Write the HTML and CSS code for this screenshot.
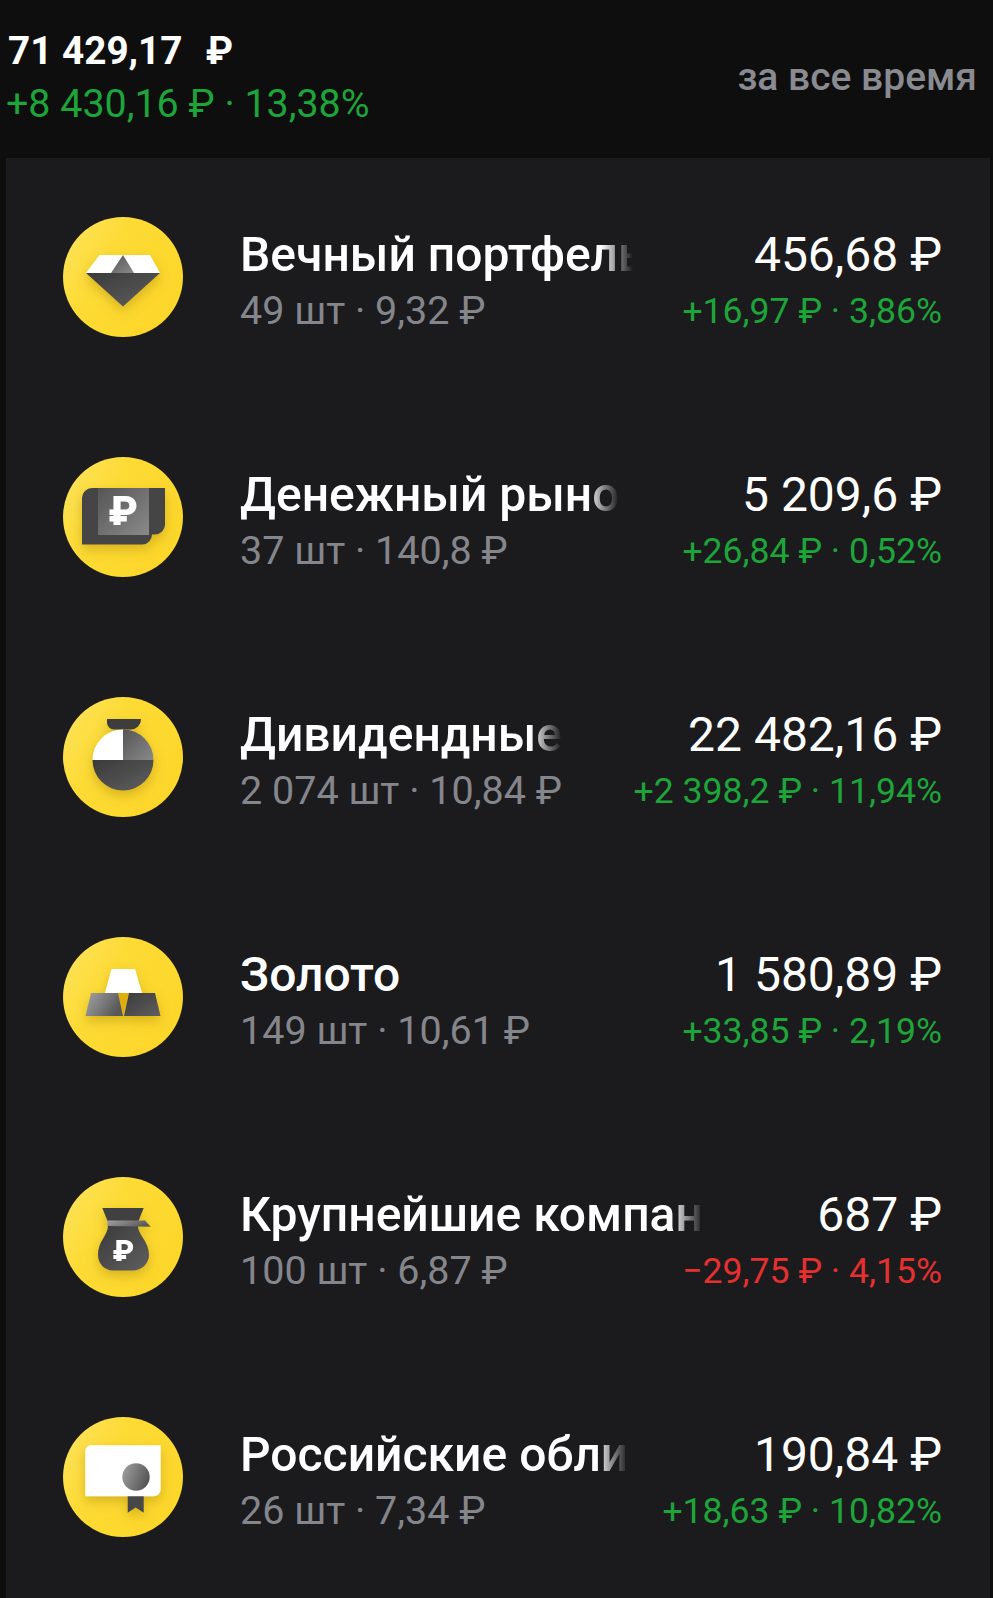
FILE: index.html
```html
<!DOCTYPE html>
<html lang="ru">
<head>
    <meta charset="UTF-8">
    <meta name="viewport" content="width=device-width, initial-scale=1.0">
    <title>Портфель</title>
    <link rel="stylesheet" href="styles.css">
</head>
<body>
    <svg class="defs" width="0" height="0" aria-hidden="true">
        <defs>
            <linearGradient id="coin" x1="0" y1="0" x2="1" y2="0.6">
                <stop offset="0" stop-color="#fde35f"/>
                <stop offset="0.45" stop-color="#fddb34"/>
                <stop offset="1" stop-color="#fdd62a"/>
            </linearGradient>
            <linearGradient id="dark" x1="0" y1="0" x2="1" y2="1">
                <stop offset="0" stop-color="#3a3a3a"/>
                <stop offset="1" stop-color="#5f5f5f"/>
            </linearGradient>
            <linearGradient id="mid" x1="0" y1="0" x2="1" y2="1">
                <stop offset="0" stop-color="#555"/>
                <stop offset="1" stop-color="#8a8a8a"/>
            </linearGradient>
            <linearGradient id="steel" x1="0" y1="0" x2="1" y2="0.4">
                <stop offset="0" stop-color="#a4a4a4"/>
                <stop offset="1" stop-color="#585858"/>
            </linearGradient>
            <filter id="soft" x="-30%" y="-30%" width="160%" height="170%">
                <feDropShadow dx="0" dy="5" stdDeviation="6" flood-color="#8a6a00" flood-opacity="0.35"/>
            </filter>
        </defs>
    </svg>

    <header class="summary">
        <div class="summary-left">
            <div class="total">71 429,17 &nbsp;<span class="total-rub">₽</span></div>
            <div class="gain up">+8 430,16 ₽ · 13,38%</div>
        </div>
        <div class="period">за все время</div>
    </header>

    <main class="list">
        <div class="row">
            <svg class="coin" viewBox="0 0 120 120">
                <circle cx="60" cy="60" r="60" fill="url(#coin)"/>
                <g filter="url(#soft)">
                    <polygon points="36.5,38 87,38 97,56 23,56" fill="#fff"/>
                    <polygon points="60,38 71,56 48,56" fill="url(#mid)"/>
                    <polygon points="23,56 97,56 60,89.5" fill="url(#dark)"/>
                </g>
            </svg>
            <div class="info">
                <div class="name fade clipped">Вечный портфель</div>
                <div class="meta">49 шт · 9,32 ₽</div>
            </div>
            <div class="values">
                <div class="amount">456,68 ₽</div>
                <div class="change up">+16,97 ₽ · 3,86%</div>
            </div>
        </div>

        <div class="row">
            <svg class="coin" viewBox="0 0 120 120">
                <circle cx="60" cy="60" r="60" fill="url(#coin)"/>
                <g filter="url(#soft)">
                    <path d="M19 87.500V41a10 10 0 0 1 10-10h73v36.500a10 10 0 0 1-10 10h-3a9.500 10 0 0 1-9.500 10z" fill="#454545"/>
                    <rect x="35" y="31" width="51" height="47" fill="url(#mid)"/>
                    <text class="coin-rub" x="60" y="68" font-size="41">₽</text>
                </g>
            </svg>
            <div class="info">
                <div class="name fade">Денежный рыно</div>
                <div class="meta">37 шт · 140,8 ₽</div>
            </div>
            <div class="values">
                <div class="amount">5 209,6 ₽</div>
                <div class="change up">+26,84 ₽ · 0,52%</div>
            </div>
        </div>

        <div class="row">
            <svg class="coin" viewBox="0 0 120 120">
                <circle cx="60" cy="60" r="60" fill="url(#coin)"/>
                <g filter="url(#soft)">
                    <path d="M44 22h33.500a.500.500 0 0 1 .500.500 10 10 0 0 1-10 10h-17a7 7 0 0 1-7-7z" fill="#3d3d3d"/>
                    <path d="M29.500 63a30.500 30.500 0 0 0 61 0z" fill="url(#dark)"/>
                    <path d="M60 32.500a30.500 30.500 0 0 0-30.500 30.500h30.500z" fill="#fff"/>
                    <path d="M60 32.500a30.500 30.500 0 0 1 30.500 30.500h-30.500z" fill="url(#mid)"/>
                </g>
            </svg>
            <div class="info">
                <div class="name fade">Дивидендные</div>
                <div class="meta">2 074 шт · 10,84 ₽</div>
            </div>
            <div class="values">
                <div class="amount">22 482,16 ₽</div>
                <div class="change up">+2 398,2 ₽ · 11,94%</div>
            </div>
        </div>

        <div class="row">
            <svg class="coin" viewBox="0 0 120 120">
                <circle cx="60" cy="60" r="60" fill="url(#coin)"/>
                <g filter="url(#soft)">
                    <polygon points="48.500,32 72,32 79,56 42,56" fill="#fff"/>
                    <polygon points="55,56 66,56 60,78" fill="#dfae10"/>
                    <polygon points="28,56 55,56 60,79 22.500,79" fill="url(#steel)"/>
                    <polygon points="66,56 92,56 97.500,79 61,79" fill="url(#dark)"/>
                </g>
            </svg>
            <div class="info">
                <div class="name">Золото</div>
                <div class="meta">149 шт · 10,61 ₽</div>
            </div>
            <div class="values">
                <div class="amount">1 580,89 ₽</div>
                <div class="change up">+33,85 ₽ · 2,19%</div>
            </div>
        </div>

        <div class="row">
            <svg class="coin" viewBox="0 0 120 120">
                <circle cx="60" cy="60" r="60" fill="url(#coin)"/>
                <g filter="url(#soft)">
                    <polygon points="39.300,31 80.700,31 75.500,44 44.500,44" fill="#3f3f3f"/>
                    <path d="M45 49c0 9-10 15-10 29 0 9 7 15.500 15 15.500h20c8 0 16-6.500 16-15.500 0-14-11-20-11-29z" fill="url(#dark)"/>
                    <polygon points="44.300,43.500 82,43.500 87.700,49.800 44.300,49" fill="url(#steel)"/>
                    <text class="coin-rub" x="60.300" y="83.500" font-size="30">₽</text>
                </g>
            </svg>
            <div class="info">
                <div class="name fade">Крупнейшие компан</div>
                <div class="meta">100 шт · 6,87 ₽</div>
            </div>
            <div class="values">
                <div class="amount">687 ₽</div>
                <div class="change down">−29,75 ₽ · 4,15%</div>
            </div>
        </div>

        <div class="row">
            <svg class="coin" viewBox="0 0 120 120">
                <circle cx="60" cy="60" r="60" fill="url(#coin)"/>
                <g filter="url(#soft)">
                    <polygon points="64.700,79 80.700,79 80.700,95.800 72.700,90.500 64.700,95.800" fill="#474747"/>
                    <path d="M28 28.200h69.700v44a7 7 0 0 1-7 7h-68.400v-45.500a6 6 0 0 1 5.700-5.700z" fill="#fff"/>
                    <circle cx="73" cy="60" r="13.700" fill="url(#steel)"/>
                </g>
            </svg>
            <div class="info">
                <div class="name fade">Российские обли</div>
                <div class="meta">26 шт · 7,34 ₽</div>
            </div>
            <div class="values">
                <div class="amount">190,84 ₽</div>
                <div class="change up">+18,63 ₽ · 10,82%</div>
            </div>
        </div>
    </main>
</body>
</html>
```

FILE: styles.css
```css
html, body {
    margin: 0;
    height: 100%;
}
body {
    font-family: Roboto, "Noto Sans", sans-serif;
    background-color: #0e0e0f;
    color: #fff;
    display: flex;
    flex-direction: column;
    height: 1598px;
    overflow: hidden;
}
.defs {
    position: absolute;
}
.summary {
    height: 158px;
    flex-shrink: 0;
    display: flex;
    justify-content: space-between;
    align-items: center;
    padding: 0 16px 4px 6px;
    box-sizing: border-box;
}
.total {
    font-size: 38.7px;
    font-weight: 700;
    line-height: 53px;
    padding-left: 2px;
}
.total-rub {
    margin-left: 4px;
}
.gain {
    font-size: 39.4px;
    line-height: 53px;
}
.period {
    font-size: 39px;
    font-weight: 500;
    color: #8a8b91;
}
.up {
    color: #1da53a;
}
.down {
    color: #e5302f;
}
.list {
    flex: 1;
    margin: 0 3px 0 6px;
    background-color: #1b1b1e;
    padding: 59px 48px 0 57px;
    display: flex;
    flex-direction: column;
    gap: 120px;
}
.row {
    height: 120px;
    display: flex;
    align-items: center;
    gap: 57px;
}
.coin {
    width: 120px;
    height: 120px;
    flex-shrink: 0;
}
.coin-rub {
    font-weight: 900;
    fill: #fff;
    text-anchor: middle;
}
.info {
    flex: 1;
    min-width: 0;
    padding-top: 11px;
}
.values {
    padding-top: 12px;
    text-align: right;
}
.name, .amount {
    font-size: 48px;
    line-height: 55px;
    white-space: nowrap;
}
.name {
    font-weight: 500;
}
.fade {
    width: fit-content;
    -webkit-mask-image: linear-gradient(to right, #000 calc(100% - 32px), transparent);
    mask-image: linear-gradient(to right, #000 calc(100% - 32px), transparent);
}
.clipped {
    max-width: 393px;
    overflow: hidden;
}
.meta, .change {
    line-height: 55px;
    white-space: nowrap;
}
.meta {
    font-size: 39.5px;
    color: #85868c;
    margin-top: 1px;
}
.change {
    font-size: 35.6px;
    margin-top: 2px;
}
```
